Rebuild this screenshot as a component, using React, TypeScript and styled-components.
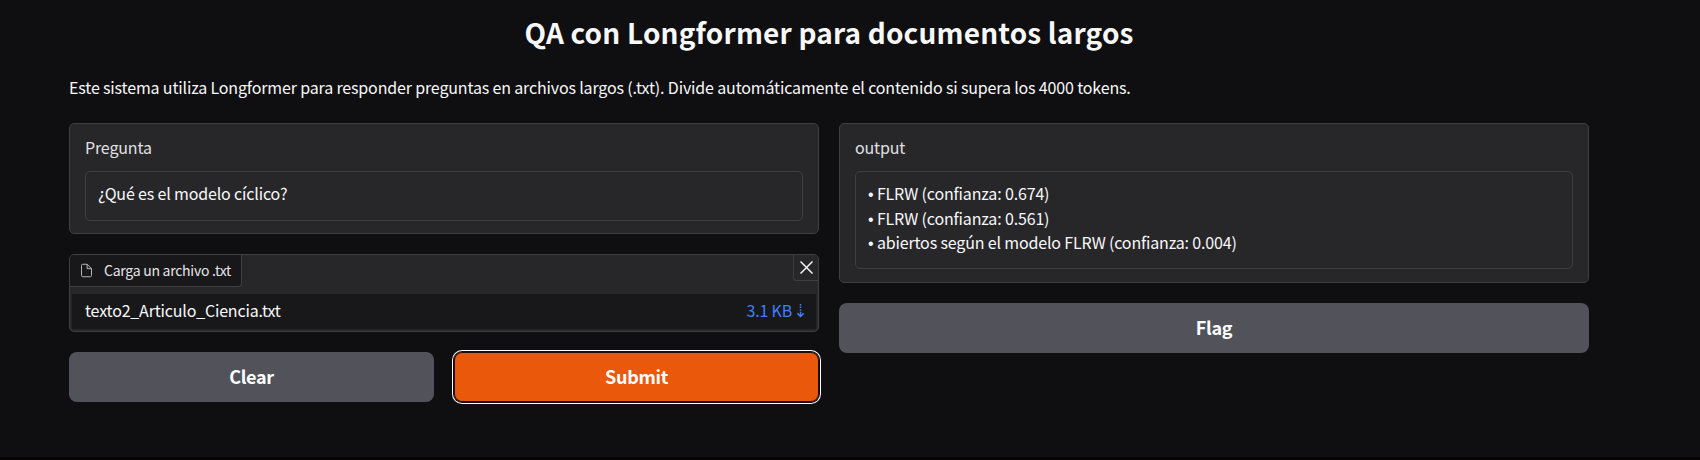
import React from "react";
import styled, { createGlobalStyle } from "styled-components";

const Global = createGlobalStyle`
  * { box-sizing: border-box; }
  body { margin: 0; background: #0f0f11; color: #f8f8f9; font-family: "Noto Sans CJK SC", "Noto Sans", sans-serif; font-size: 16px; letter-spacing: -0.155px; }
`;

const Page = styled.main`
  height: 460px;
  padding: 0 111px 0 69px;
  border-bottom: 3px solid #090204;
`;
const Title = styled.h1`
  margin: 0;
  padding-top: 9px;
  height: 75px;
  font-size: 28px;
  line-height: 46px;
  font-weight: 700;
  letter-spacing: 0.17px;
  text-align: center;
`;
const Intro = styled.p`
  margin: 0;
  height: 48px;
  line-height: 24px;
`;
const Columns = styled.div`
  display: grid;
  grid-template-columns: 1fr 1fr;
  gap: 20px;
  align-items: start;
`;
const Column = styled.div`
  display: flex;
  flex-direction: column;
  gap: 20px;
`;
const Panel = styled.section<{ $height: number }>`
  height: ${(p) => p.$height}px;
  border: 1px solid #3f3f42;
  border-radius: 5px;
  background: #27272a;
  padding: 11px 15px 12px;
`;
const FieldLabel = styled.div`
  line-height: 25px;
  margin-bottom: 11px;
  color: #e0e0e3;
`;
const Field = styled.div<{ $height: number }>`
  height: ${(p) => p.$height}px;
  border: 1px solid #3f3f42;
  border-radius: 5px;
  padding: 9px 12px;
  line-height: 24.5px;
`;
const Answer = styled.div`
  height: 24.5px;
`;
const Bullet = styled.span`
  font-family: "Liberation Sans", sans-serif;
  line-height: 1;
`;
const FilePanel = styled(Panel)`
  padding: 0 2px 2px;
  display: flex;
  flex-direction: column;
  justify-content: space-between;
`;
const FileHeader = styled.div`
  display: flex;
  justify-content: space-between;
  align-items: flex-start;
  margin: 0 -2px;
`;
const FileLabel = styled.div`
  display: flex;
  align-items: center;
  gap: 10px;
  width: 172px;
  height: 32px;
  padding: 0 0 1px 9px;
  border: solid #3f3f42;
  border-width: 0 1px 1px 0;
  border-radius: 4px 0 4px 0;
  background: #18181b;
  color: #e4e4e7;
  font-size: 14px;
  letter-spacing: -0.26px;
  white-space: nowrap;

  svg {
    color: #b4b4ba;
  }
`;
const CloseButton = styled.button`
  display: flex;
  align-items: center;
  justify-content: center;
  width: 25px;
  height: 26px;
  padding: 0;
  border: solid #3f3f42;
  border-width: 0 0 1px 1px;
  border-radius: 0 4px 0 4px;
  background: #27272a;
  color: #f4f4f5;
`;
const FileRow = styled.div`
  display: flex;
  justify-content: space-between;
  height: 35px;
  padding: 0 12px 0 13px;
  background: #18181b;
  line-height: 33px;
  letter-spacing: -0.18px;
`;
const Download = styled.a`
  display: flex;
  height: 33px;
  align-items: center;
  gap: 5px;
  color: #3b82f6;
`;
const Actions = styled.div`
  display: grid;
  grid-template-columns: 365px 365px;
  justify-content: space-between;
`;
const Button = styled.button<{ $primary?: boolean }>`
  height: 50px;
  padding: 0 0 2px;
  border: 0;
  border-radius: 8px;
  background: ${(p) => (p.$primary ? "#ea580c" : "#52525b")};
  box-shadow: ${(p) => (p.$primary ? "inset 0 0 0 1px #1c100c, 0 0 0 1px #101010, 0 0 0 2px #fff" : "none")};
  color: #fff;
  font-family: inherit;
  font-size: 18px;
  font-weight: 700;
  letter-spacing: -0.3px;
`;

const answers = [
  "FLRW (confianza: 0.674)",
  "FLRW (confianza: 0.561)",
  "abiertos según el modelo FLRW (confianza: 0.004)",
];

export default function App() {
  return (
    <>
      <Global />
      <Page>
        <Title>QA con Longformer para documentos largos</Title>
        <Intro>
          Este sistema utiliza Longformer para responder preguntas en archivos largos (.txt). Divide automáticamente el
          contenido si supera los 4000 tokens.
        </Intro>
        <Columns>
          <Column>
            <Panel $height={111}>
              <FieldLabel>Pregunta</FieldLabel>
              <Field $height={50}>¿Qué es el modelo cíclico?</Field>
            </Panel>
            <FilePanel $height={78}>
              <FileHeader>
                <FileLabel>
                  <svg width="15" height="15" viewBox="0 0 24 24" fill="none" stroke="currentColor" strokeWidth="1.6">
                    <path d="M13 2H6a2 2 0 0 0-2 2v16a2 2 0 0 0 2 2h12a2 2 0 0 0 2-2V9z" />
                    <path d="M13 2v7h7" />
                  </svg>
                  Carga un archivo .txt
                </FileLabel>
                <CloseButton aria-label="Close">
                  <svg width="13" height="13" viewBox="0 0 13 13" stroke="currentColor" strokeWidth="1.5">
                    <path d="M.5.5l12 12M12.5.5l-12 12" />
                  </svg>
                </CloseButton>
              </FileHeader>
              <FileRow>
                <span>texto2_Articulo_Ciencia.txt</span>
                <Download>
                  3.1 KB
                  <svg width="7" height="14" viewBox="0 0 7 14" fill="none" stroke="currentColor" strokeWidth="1.5">
                    <path d="M3.5 0v9" strokeDasharray="1.5 1.1" />
                    <path d="M.4 9.4l3.1 3 3.1-3" />
                    <path d="M3.5 9.2v3" />
                  </svg>
                </Download>
              </FileRow>
            </FilePanel>
            <Actions>
              <Button>Clear</Button>
              <Button $primary>Submit</Button>
            </Actions>
          </Column>
          <Column>
            <Panel $height={160}>
              <FieldLabel>output</FieldLabel>
              <Field $height={98}>
                {answers.map((answer) => (
                  <Answer key={answer}>
                    <Bullet>•</Bullet> {answer}
                  </Answer>
                ))}
              </Field>
            </Panel>
            <Button>Flag</Button>
          </Column>
        </Columns>
      </Page>
    </>
  );
}
